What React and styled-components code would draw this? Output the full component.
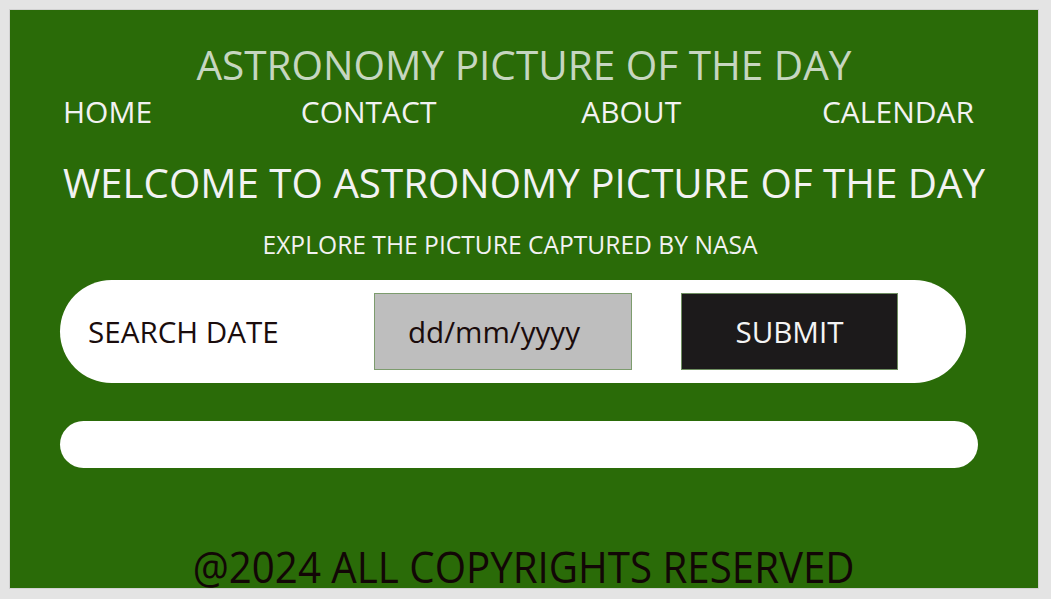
import React from "react";
import styled, { createGlobalStyle } from "styled-components";

const GlobalStyle = createGlobalStyle`
  html, body {
    margin: 0;
    padding: 0;
    background-color: #e4e4e4;
  }
  body {
    font-family: "Open Sans", "Noto Sans", sans-serif;
  }
`;

const Frame = styled.div`
  box-sizing: border-box;
  margin: 9px 0 0 9px;
  width: 1030px;
  height: 580px;
  border: 1px solid #d2d2d2;
  background-color: #2a6b08;
  display: flex;
  flex-direction: column;
  align-items: center;
  overflow: hidden;
  & > * {
    flex-shrink: 0;
  }
`;

const Title = styled.h1`
  margin: 31px 0 0 0;
  font-size: 40.5px;
  line-height: 48px;
  font-weight: 400;
  color: #c6d6c0;
`;

const Nav = styled.nav`
  box-sizing: border-box;
  width: 100%;
  display: flex;
  justify-content: space-between;
  margin-top: 5px;
  padding: 0 64px 0 53px;
`;

const NavLink = styled.a`
  color: #f2f2f2;
  text-decoration: none;
  font-size: 30px;
  line-height: 36px;
  margin-left: ${p => p.$shift || 0}px;
`;

const Welcome = styled.h2`
  margin: 28px 0 0 0;
  font-size: 40.3px;
  line-height: 50px;
  font-weight: 400;
  color: #f2f2f2;
`;

const Subtitle = styled.p`
  margin: 22px 0 0 -28px;
  font-size: 24.6px;
  line-height: 30px;
  color: #f2f2f2;
`;

const SearchBar = styled.form`
  box-sizing: border-box;
  align-self: flex-start;
  margin: 20px 0 0 50px;
  width: 906px;
  height: 103px;
  border-radius: 52px;
  background-color: #ffffff;
  display: flex;
  align-items: center;
  padding: 0 0 0 28px;
`;

const Label = styled.label`
  width: 286px;
  font-size: 29.6px;
  color: #1a0c0c;
`;

const DateField = styled.div`
  box-sizing: border-box;
  width: 258px;
  height: 77px;
  border: 1px solid #7d9c6e;
  background-color: #bebebe;
  display: flex;
  align-items: center;
  padding-left: 33px;
  font-size: 29.6px;
  color: #1a0c0c;
`;

const SubmitButton = styled.button`
  box-sizing: border-box;
  margin-left: 49px;
  width: 217px;
  height: 77px;
  border: 1px solid #6e8e60;
  background-color: #1c1a1b;
  color: #f4f4f4;
  font-family: inherit;
  font-size: 29.6px;
`;

const ResultBar = styled.div`
  align-self: flex-start;
  margin: 38px 0 0 50px;
  width: 918px;
  height: 47px;
  border-radius: 24px;
  background-color: #ffffff;
`;

const Footer = styled.footer`
  margin-top: 80px;
  font-size: 44px;
  line-height: 36px;
  color: #120606;
  transform: scaleX(0.915);
  white-space: nowrap;
`;

export default function App() {
  return (
    <>
      <GlobalStyle />
      <Frame>
        <Title>ASTRONOMY PICTURE OF THE DAY</Title>
        <Nav>
          <NavLink href="#">HOME</NavLink>
          <NavLink href="#" $shift={8}>CONTACT</NavLink>
          <NavLink href="#" $shift={4}>ABOUT</NavLink>
          <NavLink href="#">CALENDAR</NavLink>
        </Nav>
        <Welcome>WELCOME TO ASTRONOMY PICTURE OF THE DAY</Welcome>
        <Subtitle>EXPLORE THE PICTURE CAPTURED BY NASA</Subtitle>
        <SearchBar onSubmit={e => e.preventDefault()}>
          <Label>SEARCH DATE</Label>
          <DateField>dd/mm/yyyy</DateField>
          <SubmitButton type="submit">SUBMIT</SubmitButton>
        </SearchBar>
        <ResultBar />
        <Footer>@2024 ALL COPYRIGHTS RESERVED</Footer>
      </Frame>
    </>
  );
}
